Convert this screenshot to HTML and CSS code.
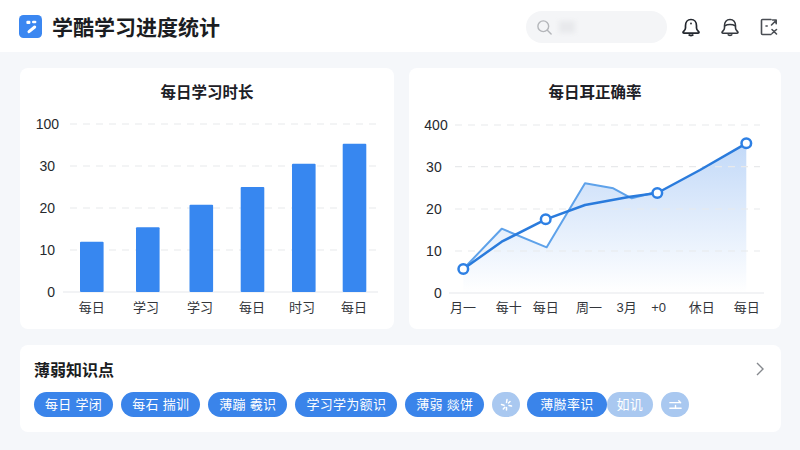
FILE: index.html
```html
<!DOCTYPE html>
<html lang="zh-CN">
<head>
  <meta charset="UTF-8" />
  <meta name="viewport" content="width=device-width, initial-scale=1.0"/>
  <title>学酷学习进度统计</title>
  <link rel="stylesheet" href="styles.css">
</head>
<body>

  <header class="topbar">
    <div class="brand">
      <svg class="logo" viewBox="0 0 23 23">
        <rect width="23" height="23" rx="4.5" fill="#3b87f1"/>
        <rect x="7.4" y="5.700" width="4" height="3.300" rx="1" fill="#fff"/>
        <rect x="13" y="5.700" width="4.400" height="2.600" rx="1.200" fill="#fff"/>
        <path d="M15.700 12 10 16.700" stroke="#fff" stroke-width="3" stroke-linecap="round"/>
      </svg>
      <h1>学酷学习进度统计</h1>
    </div>
    <div class="tools">
      <div class="search">
        <svg class="search-icon" viewBox="0 0 18 18" fill="none" stroke="#b4b6ba" stroke-width="1.500">
          <circle cx="7.700" cy="7.700" r="5.700"/>
          <path d="m12 12 4 4" stroke-linecap="round"/>
        </svg>
        <span class="search-text"></span>
      </div>
      <svg class="icon" viewBox="0 0 20 20" fill="none" stroke="#23272e" stroke-width="1.700" stroke-linejoin="round">
        <path d="M10 2.500C6.500 2.500 4.500 5.200 4.500 8.800V11C4.500 12.800 3 13.800 2.200 14.800 1.700 15.600 2.200 16.200 3 16.200H17C17.800 16.200 18.300 15.600 17.800 14.800 17 13.800 15.500 12.800 15.500 11V8.800C15.500 5.200 13.500 2.500 10 2.500Z"/>
        <path d="M7.800 17.400c.8 1.300 3.600 1.300 4.400 0" stroke-width="2"/>
        <circle cx="10" cy="6.500" r=".9" fill="#23272e" stroke="none"/>
      </svg>
      <svg class="icon" viewBox="0 0 20 20" fill="none" stroke="#33373d" stroke-width="1.600" stroke-linejoin="round">
        <path d="M10 2.500C6.500 2.500 4.500 5.200 4.500 8.800V11C4.500 12.800 3 13.800 2.200 14.800 1.700 15.600 2.200 16.200 3 16.200H17C17.800 16.200 18.300 15.600 17.800 14.800 17 13.800 15.500 12.800 15.500 11V8.800C15.500 5.200 13.500 2.500 10 2.500Z"/>
        <path d="M4.800 8.800C7.500 7 12.500 7 15.200 8.800M7.800 17.400c.8 1.300 3.600 1.300 4.400 0"/>
      </svg>
      <svg class="icon" viewBox="0 0 20 20" fill="none" stroke="#4a4e54" stroke-width="1.600" stroke-linecap="round" stroke-linejoin="round">
        <path d="M12 2.500H3.500a1 1 0 0 0-1 1v13a1 1 0 0 0 1 1H12"/>
        <path d="M7 9h1.200M12.500 8l4.500-4.500M13.500 3h3.700v3.700M13 12.500l4.500 4.500M13 16.500l4.500-4"/>
      </svg>
    </div>
  </header>

  <main class="content">
    <div class="charts">
      <section class="card">
        <h2>每日学习时长</h2>
        <svg class="chart" viewBox="0 0 374 217">
          <g class="grid">
            <line x1="50" x2="357" y1="12" y2="12"/>
            <line x1="50" x2="357" y1="54" y2="54"/>
            <line x1="50" x2="357" y1="96" y2="96"/>
            <line x1="50" x2="357" y1="138" y2="138"/>
          </g>
          <line class="axis" x1="43" x2="358" y1="180" y2="180"/>
          <g class="ylabels">
            <text x="39" y="12">100</text>
            <text x="35" y="54">30</text>
            <text x="35" y="96">20</text>
            <text x="35" y="138">10</text>
            <text x="35" y="180">0</text>
          </g>
          <g class="bars">
            <rect x="60" y="129.700" width="23.600" height="50.300" rx="1"/>
            <rect x="116" y="115.300" width="23.600" height="64.700" rx="1"/>
            <rect x="169.500" y="92.700" width="23.600" height="87.300" rx="1"/>
            <rect x="220.700" y="75" width="23.600" height="105" rx="1"/>
            <rect x="272" y="51.700" width="23.600" height="128.300" rx="1"/>
            <rect x="322.700" y="31.700" width="23.600" height="148.300" rx="1"/>
          </g>
          <g class="xlabels">
            <text x="71.700" y="195">每日</text>
            <text x="126" y="195">学习</text>
            <text x="180" y="195">学习</text>
            <text x="232" y="195">每日</text>
            <text x="282" y="195">时习</text>
            <text x="334" y="195">每日</text>
          </g>
        </svg>
      </section>

      <section class="card">
        <h2>每日耳正确率</h2>
        <svg class="chart" viewBox="0 0 372 217">
          <defs>
            <linearGradient id="areaFill" x1="0" x2="0" y1="0" y2="1">
              <stop offset="0" stop-color="#c2d9f8"/>
              <stop offset="1" stop-color="#ffffff"/>
            </linearGradient>
          </defs>
          <path d="M54.300 157 92.700 116.700 137.700 135.300 176 71.300 204.300 76.300 222.700 86.300 248.300 81 291 58 337.300 31.300V181H54.300z" fill="url(#areaFill)"/>
          <g class="grid">
            <line x1="46" x2="351" y1="13" y2="13"/>
            <line x1="46" x2="351" y1="54.700" y2="54.700"/>
            <line x1="46" x2="351" y1="97" y2="97"/>
            <line x1="46" x2="351" y1="139" y2="139"/>
          </g>
          <line class="axis" x1="40" x2="355" y1="181" y2="181"/>
          <g class="ylabels">
            <text x="38.700" y="13">400</text>
            <text x="32.700" y="54.700">30</text>
            <text x="32.700" y="97">20</text>
            <text x="32.700" y="139">10</text>
            <text x="32.700" y="181">0</text>
          </g>
          <polyline class="line-back" points="54.300,157 92.700,116.700 137.700,135.300 176,71.300 204.300,76.300 222.700,86.300 248.300,79.700"/>
          <polyline class="line-main" points="54.300,157 92.700,129.700 136.700,107.300 176,93 221,84.700 248.300,81 291,58 337.300,31.300"/>
          <g class="dots">
            <circle cx="54.300" cy="157" r="4.800"/>
            <circle cx="136.700" cy="107.300" r="4.800"/>
            <circle cx="248.300" cy="81" r="4.800"/>
            <circle cx="337.300" cy="31.300" r="4.800"/>
          </g>
          <g class="xlabels">
            <text x="54" y="195.700">月一</text>
            <text x="99.700" y="195.700">每十</text>
            <text x="136.700" y="195.700">每日</text>
            <text x="180" y="195.700">周一</text>
            <text x="217.700" y="195.700">3月</text>
            <text x="249.700" y="195.700">+0</text>
            <text x="292.700" y="195.700">休日</text>
            <text x="337.700" y="195.700">每日</text>
          </g>
        </svg>
      </section>
    </div>

    <section class="card weak">
      <div class="weak-head">
        <h3>薄弱知识点</h3>
        <svg class="chevron" viewBox="0 0 10 16" fill="none" stroke="#85888d" stroke-width="1.400">
          <path d="m2 2 6 6-6 6"/>
        </svg>
      </div>
      <div class="chips">
        <span class="chip">每日 学闭</span>
        <span class="chip">每石 揣训</span>
        <span class="chip">薄蹦 羲识</span>
        <span class="chip">学习学为额识</span>
        <span class="chip">薄弱 燚饼</span>
        <span class="chip chip-round">
          <svg viewBox="0 0 14 14" fill="none" stroke="#fff" stroke-width="1.500" stroke-linecap="round">
            <path d="M7.500 1.500 7 4.500M7 9.500v2.500M2 6.500l2.500.8M9.500 7.500l2.500.5M3.800 11 5.300 9.300M10.500 3.500 9 5"/>
          </svg>
        </span>
        <div class="chip-pair">
          <span class="chip">薄臌率识</span>
          <span class="chip chip-light">如讥</span>
        </div>
        <span class="chip chip-round">
          <svg viewBox="0 0 16 14" fill="none" stroke="#fff" stroke-width="1.500" stroke-linecap="round" stroke-linejoin="round">
            <path d="M2 4.500h11.500M11.500 2.500l2 2M2 10.500h12M8 7.500v3"/>
          </svg>
        </span>
      </div>
    </section>
  </main>

</body>
</html>
```

FILE: styles.css
```css
* {
  box-sizing: border-box;
}

body {
  font-family: "Liberation Sans", "Noto Sans CJK SC", sans-serif;
  background: #f5f7fa;
  margin: 0;
  width: 800px;
  height: 450px;
  overflow: hidden;
  color: #1c1f24;
}

.topbar {
  height: 52px;
  background: #fff;
  display: flex;
  align-items: center;
  justify-content: space-between;
  padding: 2px 21px 0 19px;
}

.brand {
  display: flex;
  align-items: center;
  gap: 10px;
  margin-bottom: 2px;
}

.logo {
  width: 23px;
  height: 23px;
}

.brand h1 {
  font-size: 21px;
  font-weight: 700;
  margin: 0;
  color: #1b1d22;
}

.tools {
  display: flex;
  align-items: center;
}

.search {
  width: 141px;
  height: 32px;
  border-radius: 16px;
  background: #f4f5f7;
  display: flex;
  align-items: center;
  padding-left: 10px;
  gap: 6px;
  margin-right: 14px;
}

.search-icon {
  width: 17px;
  height: 17px;
}

.search-text {
  width: 16px;
  height: 12px;
  background: #e8e9ec;
  filter: blur(2px);
}

.icon {
  width: 20px;
  height: 20px;
  margin-right: 19px;
}

.icon:last-child {
  margin-right: 0;
}

.content {
  padding: 16px 19px 0 20px;
}

.charts {
  display: grid;
  grid-template-columns: 374px 372px;
  gap: 15px;
  margin-bottom: 16px;
}

.card {
  background: #fff;
  border-radius: 8px;
}

.card h2 {
  font-size: 15.5px;
  font-weight: 700;
  text-align: center;
  margin: 0;
  height: 44px;
  line-height: 49px;
  color: #1d2026;
}

.chart {
  display: block;
  width: 100%;
  height: 217px;
}

.grid line {
  stroke: #e8e9eb;
  stroke-width: 1.200;
  stroke-dasharray: 7 6;
}

.axis {
  stroke: #e6e8eb;
  stroke-width: 1.200;
}

.ylabels text {
  font-size: 14px;
  text-anchor: end;
  dominant-baseline: central;
  fill: #26292e;
}

.xlabels text {
  font-size: 13px;
  text-anchor: middle;
  dominant-baseline: central;
  fill: #33363b;
}

.bars rect {
  fill: #3787f0;
}

.line-back {
  fill: none;
  stroke: #5ea2ea;
  stroke-width: 2;
  stroke-linejoin: round;
}

.line-main {
  fill: none;
  stroke: #2a7bdc;
  stroke-width: 2.500;
  stroke-linejoin: round;
}

.dots circle {
  fill: #fff;
  stroke: #2e80e4;
  stroke-width: 2.500;
}

.weak {
  width: 761px;
  height: 87px;
  padding: 12px 14px 0;
}

.weak-head {
  display: flex;
  align-items: center;
  justify-content: space-between;
  height: 24px;
  margin-bottom: 11px;
}

.weak-head h3 {
  font-size: 16px;
  font-weight: 700;
  margin: 0;
  color: #1b1d22;
}

.chevron {
  width: 10px;
  height: 16px;
  margin-right: 2px;
}

.chips {
  display: flex;
  align-items: center;
  gap: 8px;
}

.chip {
  height: 25px;
  padding: 0 11px;
  border-radius: 13px;
  background: #3a84ea;
  color: #fff;
  font-size: 13px;
  letter-spacing: 0.3px;
  line-height: 25px;
  white-space: nowrap;
}

.chip-round {
  width: 28px;
  padding: 0;
  background: #a9c8f0;
  display: flex;
  align-items: center;
  justify-content: center;
}

.chip-round svg {
  width: 15px;
  height: 14px;
}

.chip-pair {
  display: flex;
  margin-left: -1px;
}

.chip-pair .chip {
  padding: 0 13px;
}

.chip-pair .chip-light {
  padding: 0 10px;
  background: #a9c8f0;
}
```
